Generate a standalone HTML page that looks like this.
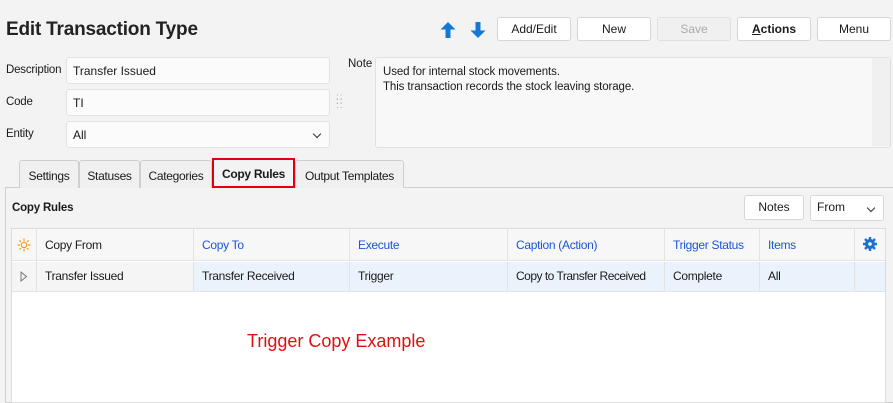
<!DOCTYPE html><html><head><style>
*{box-sizing:border-box;margin:0;padding:0}
body{width:893px;height:401px;background:#f3f3f3;font-family:"Liberation Sans",sans-serif;font-size:12px;color:#1a1a1a;position:relative;overflow:hidden}
.a{position:absolute}
.btn{position:absolute;top:17px;height:24px;width:74px;background:#fff;border:1px solid #d6d6d6;border-radius:3px;text-align:center;line-height:22px;font-size:12px}
.inp{position:absolute;left:66px;width:264px;height:27px;background:#fbfbfb;border:1px solid #e2e2e2;border-radius:3px;padding-left:6px;line-height:26px;font-size:12px}
.lbl{position:absolute;left:6px;font-size:11.5px;letter-spacing:-0.2px}
.tab{position:absolute;top:160px;height:28px;border:1px solid #cfcfcf;border-bottom:none;background:#f0f0f0;text-align:center;line-height:30px;font-size:12px;letter-spacing:-0.3px;border-radius:3px 3px 0 0}
.c{position:absolute;border-right:1px solid #e3e3e3;padding-left:8px;font-size:12px;letter-spacing:-0.3px;white-space:nowrap;overflow:hidden}
.h{top:229px;height:32px;line-height:32px;color:#1a55d8}
.d{top:262px;height:29px;line-height:29px}
.chev{position:absolute;right:9px;top:9px;width:6px;height:6px;border-right:1.3px solid #333;border-bottom:1.3px solid #333;transform:rotate(45deg)}
</style></head><body>
<div class="a" style="left:6px;top:19px;font-size:19px;font-weight:bold;color:#222;letter-spacing:-0.2px">Edit Transaction Type</div>
<svg class="a" style="left:440px;top:21px" width="16" height="18" viewBox="0 0 16 18"><path d="M8 1 L15.5 8.5 H10.5 V17 H5.5 V8.5 H0.5Z" fill="#1378d6"/></svg>
<svg class="a" style="left:470px;top:21px" width="16" height="18" viewBox="0 0 16 18"><path d="M8 17 L15.5 9.5 H10.5 V1 H5.5 V9.5 H0.5Z" fill="#1378d6"/></svg>
<div class="btn" style="left:497px">Add/Edit</div>
<div class="btn" style="left:577px">New</div>
<div class="btn" style="left:657px;background:#f0f0f0;color:#aaa;border-color:#e0e0e0">Save</div>
<div class="btn" style="left:737px;font-weight:bold"><u>A</u>ctions</div>
<div class="btn" style="left:817px">Menu</div>
<div class="lbl" style="top:64px">Description</div>
<div class="inp" style="top:57px">Transfer Issued</div>
<div class="lbl" style="top:96px">Code</div>
<div class="inp" style="top:89px">TI</div>
<div class="a" style="left:336px;top:96px;color:#aaa;font-size:10px;line-height:4px;letter-spacing:1px">::<br>::<br>::</div>
<div class="lbl" style="top:128px">Entity</div>
<div class="inp" style="top:121px">All<span class="chev"></span></div>
<div class="a" style="left:348px;top:58px;font-size:11.5px">Note</div>
<div class="a" style="left:375px;top:57px;width:516px;height:91px;background:#f8f8f8;border:1px solid #e0e0e0;border-radius:3px;padding:7px 0 0 7px;line-height:15px;font-size:11.5px;letter-spacing:-0.1px">Used for internal stock movements.<br>This transaction records the stock leaving storage.<div class="a" style="right:0;top:0;width:18px;height:88px;background:#f0f0f0"></div></div>
<div class="a" style="left:5px;top:187px;width:890px;height:216px;border:1px solid #cfcfcf;background:#f3f3f3"></div>
<div class="tab" style="left:19px;width:60px">Settings</div>
<div class="tab" style="left:79px;width:61px">Statuses</div>
<div class="tab" style="left:140px;width:72px">Categories</div>
<div class="tab" style="left:212px;width:83px;top:158px;height:30px;border:2px solid #e00010;background:#f3f3f3;font-weight:bold;border-radius:0;line-height:28px">Copy Rules</div>
<div class="tab" style="left:295px;width:109px">Output Templates</div>
<div class="a" style="left:12px;top:202px;font-weight:bold;font-size:11.5px;letter-spacing:-0.2px">Copy Rules</div>
<div class="btn" style="left:744px;top:195px;width:60px;height:25px">Notes</div>
<div class="btn" style="left:810px;top:195px;width:74px;height:26px;text-align:left;padding-left:6px">From<span class="chev"></span></div>
<div class="a" style="left:11px;top:228px;width:875px;height:175px;background:#fff;border:1px solid #dcdcdc"></div>
<div class="a" style="left:12px;top:229px;width:873px;height:32px;background:#f7f7f7;border-bottom:1px solid #e3e3e3"></div>
<div class="a" style="left:12px;top:262px;width:873px;height:30px;background:#eaf3fc;border-bottom:1px solid #e3e3e3"></div>
<div class="a" style="left:12px;top:262px;width:182px;height:29px;background:#f5f5f5"></div>
<svg class="a" style="left:17px;top:238px" width="14" height="14" viewBox="0 0 14 14"><circle cx="7" cy="7" r="2.6" fill="none" stroke="#f59a1a" stroke-width="1.2"/><g stroke="#f59a1a" stroke-width="1.2"><path d="M7 0.5V3M7 11V13.5M0.5 7H3M11 7H13.5M2.4 2.4L4 4M10 10L11.6 11.6M11.6 2.4L10 4M4 10L2.4 11.6"/></g></svg>
<div class="a" style="left:36px;top:229px;width:1px;height:62px;background:#e3e3e3"></div>
<div class="c h" style="left:37px;width:157px;color:#1a1a1a">Copy From</div>
<div class="c h" style="left:194px;width:156px">Copy To</div>
<div class="c h" style="left:350px;width:158px">Execute</div>
<div class="c h" style="left:508px;width:157px">Caption (Action)</div>
<div class="c h" style="left:665px;width:95px">Trigger Status</div>
<div class="c h" style="left:760px;width:95px">Items</div>
<svg class="a" style="left:863px;top:237px" width="14" height="14" viewBox="0 0 14 14"><circle cx="7" cy="7" r="5" fill="#1a6fd0"/><g stroke="#1a6fd0" stroke-width="2.4"><path d="M7 0V14M0 7H14M2 2L12 12M12 2L2 12"/></g><circle cx="7" cy="7" r="1.8" fill="#fff"/></svg>
<svg class="a" style="left:20px;top:271px" width="8" height="11" viewBox="0 0 8 11"><path d="M1 1L6.5 5.5L1 10Z" fill="none" stroke="#777"/></svg>
<div class="c d" style="left:37px;width:157px">Transfer Issued</div>
<div class="c d" style="left:194px;width:156px">Transfer Received</div>
<div class="c d" style="left:350px;width:158px">Trigger</div>
<div class="c d" style="left:508px;width:157px;letter-spacing:-0.5px">Copy to Transfer Received</div>
<div class="c d" style="left:665px;width:95px">Complete</div>
<div class="c d" style="left:760px;width:95px">All</div>
<div class="a" style="left:247px;top:331px;font-size:18px;color:#e01010">Trigger Copy Example</div>
</body></html>
